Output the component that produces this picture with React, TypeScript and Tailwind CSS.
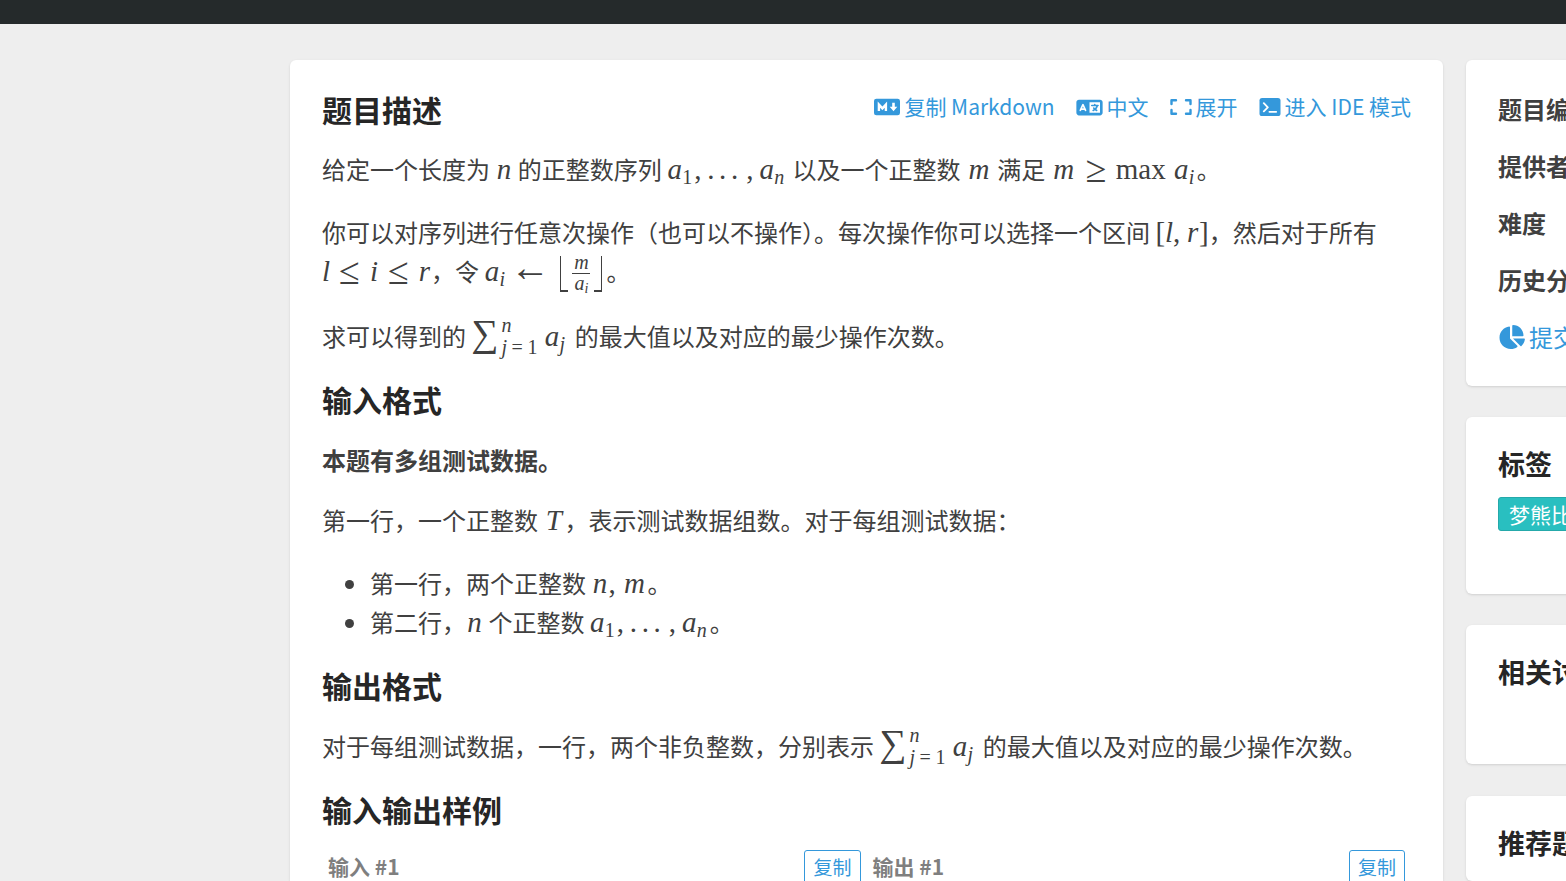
import type { ReactNode } from "react";
import { FaChartPie, FaLanguage } from "react-icons/fa6";

// advance widths of the math letters, in body size and in script size
const bodyWidth: Record<string, string> = {
  a: "w-[15px]",
  n: "w-[17px]",
  m: "w-[26px]",
  l: "w-[8px]",
  r: "w-[13px]",
  i: "w-[10px]",
  T: "w-[21px]",
};
const scriptWidth: Record<string, string> = {
  "1": "w-[12px]",
  n: "w-[13px]",
  i: "w-[8px]",
  j: "w-[10px]",
};

function Var({ children }: { children: string }) {
  return <i className={`inline-block text-center ${bodyWidth[children]}`}>{children}</i>;
}

function Sub({ children }: { children: string }) {
  const italic = children === "1" ? "" : "italic";
  return (
    <span className={`inline-block align-[-5px] text-[20px] ${italic} ${scriptWidth[children]}`}>
      {children}
    </span>
  );
}

function Rel({ children }: { children: string }) {
  return (
    <span className="inline-block w-[39px] text-center align-[-3px] text-[38px] leading-6">{children}</span>
  );
}

function Comma() {
  return <span className="inline-block w-[13px]">,</span>;
}

function Dots() {
  return (
    <span className="inline-flex w-[39px] justify-between pr-2">
      <span>.</span>
      <span>.</span>
      <span>.</span>
    </span>
  );
}

function Formula({ children }: { children: ReactNode }) {
  return (
    <span className="inline-block whitespace-nowrap font-['Liberation_Serif',serif] text-[29px] leading-none">
      {children}
    </span>
  );
}

function Sequence() {
  return (
    <Formula>
      <Var>a</Var>
      <Sub>1</Sub>
      <Comma />
      <Dots />
      <Comma />
      <Var>a</Var>
      <Sub>n</Sub>
    </Formula>
  );
}

function Sum() {
  return (
    <Formula>
      <span className="inline-block w-[30px] text-[38px] leading-6">∑</span>
      <span className="-my-2 inline-flex w-[43px] flex-col align-[14px] text-[20px] leading-[22px]">
        <i>n</i>
        <span className="flex w-9 justify-between">
          <i>j</i>
          <span>=</span>
          <span>1</span>
        </span>
      </span>
      <Var>a</Var>
      <Sub>j</Sub>
    </Formula>
  );
}

function FloorFraction() {
  return (
    <span className="-my-2 ml-2 inline-flex h-[36px] align-[-11px] text-[20px]">
      <span className="w-2 border-b-2 border-l border-current" />
      <span className="mx-1 flex w-[18px] flex-col items-center">
        <i className="h-[18px] w-full shrink-0 border-b border-current text-center leading-[13px]">m</i>
        <span className="whitespace-nowrap leading-[19px]">
          <i>a</i>
          <i className="align-[-3px] text-[14px] leading-none">i</i>
        </span>
      </span>
      <span className="mr-1 w-2 border-r border-b-2 border-current" />
    </span>
  );
}

function MarkdownIcon() {
  return (
    <svg viewBox="0 0 26 18" className="h-[18px] w-[26px]">
      <rect y="0.7" width="26" height="16.6" rx="2.4" fill="currentColor" />
      <path d="M4.9 13V6.6L8.4 10.4L11.9 6.6V13" fill="none" stroke="white" strokeWidth="2.4" />
      <path d="M18.2 4.8H20.8V8.8H23.3L19.5 13.2L15.7 8.8H18.2Z" fill="white" />
    </svg>
  );
}

function ExpandIcon() {
  return (
    <svg viewBox="0 0 22 18" className="h-[18px] w-[22px]" fill="none" stroke="currentColor" strokeWidth="2.4" strokeLinecap="round" strokeLinejoin="round">
      <path d="M1.5 6V2.2H6M16 2.2H20.5V6M20.5 12v3.8H16M6 15.8H1.5V12" />
    </svg>
  );
}

function TerminalIcon() {
  return (
    <svg viewBox="0 0 22 18" className="h-[18px] w-[22px]">
      <rect x="0.5" width="21" height="18" rx="2.6" fill="currentColor" />
      <path d="M4.8 5.2 8.8 9.4l-4 4M10.4 13.8h6.8" fill="none" stroke="white" strokeWidth="1.8" strokeLinecap="round" strokeLinejoin="round" />
    </svg>
  );
}

function ActionLink({ icon, children }: { icon: ReactNode; children: ReactNode }) {
  return (
    <a href="#" className="flex items-center gap-1 text-[#3498db]">
      <span className="pt-0.5">{icon}</span>
      {children}
    </a>
  );
}

function SectionTitle({ children }: { children: ReactNode }) {
  return <h2 className="mt-[25px] mb-[22px] text-[30px] leading-[38px] font-bold text-[#262626]">{children}</h2>;
}

function Sample({ label }: { label: string }) {
  return (
    <div className="flex flex-1 items-start justify-between px-1.5">
      <h3 className="text-[21px] leading-8 font-bold text-[#7f7f7f]">{label}</h3>
      <button type="button" className="rounded-[3px] border border-[#3498db] px-2 text-[19px] leading-8 text-[#3498db]">
        复制
      </button>
    </div>
  );
}

function SideCard({ className, children }: { className: string; children: ReactNode }) {
  return <section className={`rounded-md bg-white px-8 shadow-sm ${className}`}>{children}</section>;
}

function SideTitle({ children }: { children: ReactNode }) {
  return <h2 className="text-[27px] leading-9 font-bold text-[#262626]">{children}</h2>;
}

const facts = ["题目编号", "提供者", "难度", "历史分数"];

export default function App() {
  return (
    <div className="flex h-screen flex-col overflow-hidden bg-[#eee] font-['Noto_Sans_CJK_SC',sans-serif] text-[24px] text-[#404040]">
      <header className="h-6 shrink-0 bg-[#252a2b]" />

      <div className="flex min-h-0 flex-1 gap-[23px] pt-9 pl-[290px]">
        <main className="min-w-0 flex-1 rounded-t-md bg-white px-8 pt-[31px] shadow-sm">
          <div className="mb-[22px] flex items-start justify-between">
            <h2 className="text-[30px] leading-9 font-bold text-[#262626]">题目描述</h2>
            <nav className="flex gap-[21px] text-[21px] leading-[30px]">
              <ActionLink icon={<MarkdownIcon />}>复制 Markdown</ActionLink>
              <ActionLink icon={<FaLanguage className="h-[21px] w-[27px]" />}>中文</ActionLink>
              <ActionLink icon={<ExpandIcon />}>展开</ActionLink>
              <ActionLink icon={<TerminalIcon />}>进入 IDE 模式</ActionLink>
            </nav>
          </div>

          <div className="space-y-6 leading-[39px]">
            <p>
              给定一个长度为 <Formula><Var>n</Var></Formula> 的正整数序列 <Sequence /> 以及一个正整数{" "}
              <Formula><Var>m</Var></Formula> 满足{" "}
              <Formula>
                <Var>m</Var>
                <Rel>≥</Rel>
                <span className="inline-block w-[58px]">max</span>
                <Var>a</Var>
                <Sub>i</Sub>
              </Formula>
              。
            </p>
            <p>
              你可以对序列进行任意次操作（也可以不操作）。每次操作你可以选择一个区间{" "}
              <Formula>
                [<Var>l</Var>
                <Comma />
                <Var>r</Var>]
              </Formula>
              ，然后对于所有{" "}
              <Formula>
                <Var>l</Var>
                <Rel>≤</Rel>
                <Var>i</Var>
                <Rel>≤</Rel>
                <Var>r</Var>
              </Formula>
              ，令{" "}
              <Formula>
                <Var>a</Var>
                <Sub>i</Sub>
                <span className="inline-block w-[45px] text-center text-[40px] leading-6">←</span>
                <FloorFraction />
              </Formula>
              。
            </p>
            <p className="pt-0.5">
              求可以得到的 <Sum /> 的最大值以及对应的最少操作次数。
            </p>
          </div>

          <SectionTitle>输入格式</SectionTitle>
          <div className="space-y-6 pt-0.5 leading-9">
            <p className="font-bold">本题有多组测试数据。</p>
            <p>
              第一行，一个正整数 <Formula><Var>T</Var></Formula>，表示测试数据组数。对于每组测试数据：
            </p>
            <ul className="list-disc pt-px pl-12 leading-[39px]">
              <li>
                第一行，两个正整数{" "}
                <Formula>
                  <Var>n</Var>
                  <Comma />
                  <Var>m</Var>
                </Formula>
                。
              </li>
              <li>
                第二行，<Formula><Var>n</Var></Formula> 个正整数 <Sequence />。
              </li>
            </ul>
          </div>

          <SectionTitle>输出格式</SectionTitle>
          <p className="leading-[39px]">
            对于每组测试数据，一行，两个非负整数，分别表示 <Sum /> 的最大值以及对应的最少操作次数。
          </p>

          <SectionTitle>输入输出样例</SectionTitle>
          <div className="flex">
            <Sample label="输入 #1" />
            <Sample label="输出 #1" />
          </div>
        </main>

        <aside className="-mr-[300px] flex w-[400px] shrink-0 flex-col">
          <SideCard className="mb-[31px] space-y-[21px] pt-[31px] pb-[31px]">
            {facts.map((fact) => (
              <p key={fact} className="leading-9 font-bold">
                {fact}
              </p>
            ))}
            <a href="#" className="flex items-center gap-1 leading-9 text-[#3498db]">
              <FaChartPie className="h-6 w-[27px]" />
              提交记录
            </a>
          </SideCard>
          <SideCard className="mb-[31px] pt-[29px] pb-[63px]">
            <SideTitle>标签</SideTitle>
            <a href="#" className="mt-[15px] inline-block rounded-[3px] border border-[#25a9aa] bg-[#29bfc0] px-2.5 text-[21px] leading-8 text-white">
              梦熊比赛
            </a>
          </SideCard>
          <SideCard className="mb-8 pt-[29px] pb-[74px]">
            <SideTitle>相关讨论</SideTitle>
          </SideCard>
          <SideCard className="flex-1 pt-[29px]">
            <SideTitle>推荐题目</SideTitle>
          </SideCard>
        </aside>
      </div>
    </div>
  );
}
